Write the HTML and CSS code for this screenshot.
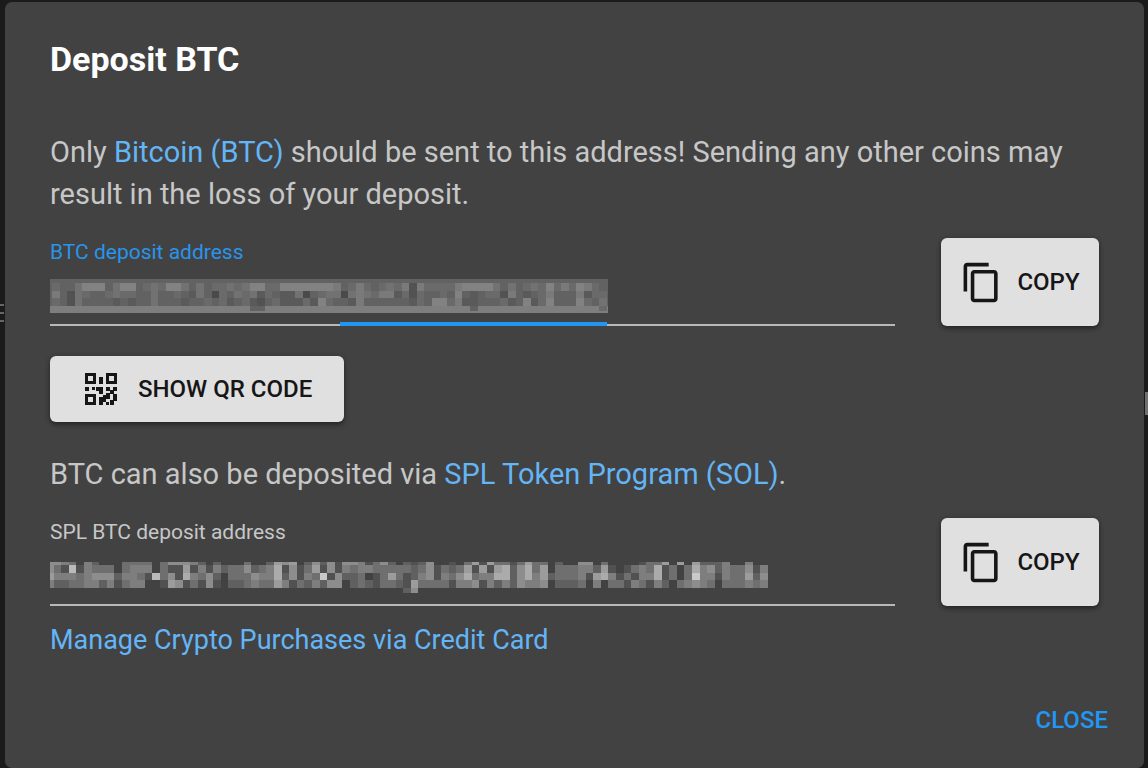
FILE: index.html
```html
<!DOCTYPE html>
<html lang="en">
<head>
<meta charset="utf-8">
<title>Deposit BTC</title>
<link rel="stylesheet" href="styles.css">
</head>
<body>
<svg width="0" height="0" class="sprite" aria-hidden="true">
  <symbol id="copy" viewBox="0 0 24 24"><path d="M16 1H4c-1.100 0-2 .9-2 2v14h2V3h12V1zm3 4H8c-1.100 0-2 .9-2 2v14c0 1.100.9 2 2 2h11c1.100 0 2-.9 2-2V7c0-1.100-.9-2-2-2zm0 16H8V7h11v14z"/></symbol>
</svg>
<div class="page">
  <div class="page-handle"></div>
  <div class="page-thumb"></div>
  <main class="dialog" role="dialog" aria-labelledby="title">
    <h1 class="title" id="title">Deposit BTC</h1>
    <div class="content">
      <p class="text">Only <a class="link" href="#btc">Bitcoin (BTC)</a> should be sent to this address! Sending any other coins may result in the loss of your deposit.</p>
      <div class="row">
        <div class="field focused">
          <label class="label" for="btc-address">BTC deposit address</label>
          <input class="input" id="btc-address" type="text" readonly>
          <svg class="mosaic" id="mosaic-btc" width="558" height="34" aria-hidden="true"></svg>
          <span class="accent"></span>
        </div>
        <button class="button copy" type="button"><svg class="copy-icon"><use href="#copy"/></svg>COPY</button>
      </div>
      <button class="button qr" type="button">
        <svg class="qr-icon" viewBox="0 0 34 34" aria-hidden="true">
          <path fill-rule="evenodd" d="M1 1h11v11H1zM4 4v5h5V4zM22 1h11v11H22zM25 4v5h5V4zM1 22h11v11H1zM4 25v5h5v-5z"/>
          <path d="M15 5h4v7h-4zM1 15h4v4H1zM8 15h3v3H8zM12 15h7v7h-4v-3h-3zM22 15h4v4h-4zM29 15h4v4h-4zM26 18h4v4h-4zM22 21h4v4h-4zM15 25h4v-2h7v4h-4v3h-3v3h-4zM29 22h4v7h-4zM26 28h4v5h-4zM22 30h3v3h-3z"/>
        </svg>SHOW QR CODE</button>
      <p class="text via">BTC can also be deposited via <a class="link" href="#spl">SPL Token Program (SOL)</a>.</p>
      <div class="row">
        <div class="field">
          <label class="label" for="spl-address">SPL BTC deposit address</label>
          <input class="input" id="spl-address" type="text" readonly>
          <svg class="mosaic" id="mosaic-spl" width="720" height="34" aria-hidden="true"></svg>
        </div>
        <button class="button copy" type="button"><svg class="copy-icon"><use href="#copy"/></svg>COPY</button>
      </div>
      <p class="text manage"><a class="link" href="#manage">Manage Crypto Purchases via Credit Card</a></p>
    </div>
    <div class="actions"><button class="close" type="button">CLOSE</button></div>
  </main>
</div>
<script src="mosaic.js"></script>
</body>
</html>
```
FILE: styles.css
```css
* { box-sizing: border-box; }
body { margin: 0; background: #1b1b1b; font-family: Roboto, "Liberation Sans", sans-serif; color: #c7c7c7; }
.sprite { position: absolute; }
.page { position: relative; min-height: 100vh; padding: 2px 4px 0 5px; display: flex; }
.page-handle { position: absolute; left: 0; top: 304px; width: 4px; height: 18px; background: repeating-linear-gradient(#666 0 2px, #1b1b1b 2px 8px); }
.page-thumb { position: absolute; right: 0; top: 392px; width: 3px; height: 23px; background: #707070; }
.dialog { flex: 1; min-width: 0; display: flex; flex-direction: column; background: #424242; border-radius: 7px; }
.title { margin: 0; padding: 33px 45px 0; font-size: 34px; line-height: 48px; font-weight: 700; color: #fff; }
.content { padding: 48px 45px 0; }
.text { margin: 0; font-size: 29px; line-height: 42px; }
.link { color: #64b5f6; text-decoration: none; }
.row { display: flex; align-items: stretch; gap: 46px; margin-top: 23px; }
.field { position: relative; flex: 1; min-width: 0; display: flex; flex-direction: column; border-bottom: 2px solid #b8b8b8; }
.label { font-size: 21px; line-height: 28px; }
.focused .label { color: #2994ea; }
.input { flex: 1; width: 100%; min-width: 0; padding: 0; border: 0; outline: 0; background: transparent; color: inherit; font: inherit; font-size: 29px; }
.mosaic { position: absolute; left: 0; bottom: 11px; }
.accent { position: absolute; left: 290px; bottom: -2px; width: 267px; height: 4px; background: #2196f3; }
.button { display: flex; align-items: center; justify-content: center; border: 0; border-radius: 6px; background: #e0e0e0; color: #161616; font-family: inherit; font-size: 24px; line-height: 42px; font-weight: 500; box-shadow: 0 3px 4px rgba(0,0,0,.3), 0 1px 6px rgba(0,0,0,.2); }
.copy { flex: none; width: 158px; height: 88px; gap: 14px; padding: 0; }
.copy-icon { width: 43px; height: 43px; fill: #161616; }
.qr { height: 66px; margin-top: 30px; padding: 0 32px 0 34px; gap: 20px; }
.qr-icon { width: 34px; height: 34px; fill: #161616; }
.via { margin-top: 31px; }
.manage { margin-top: 13px; font-size: 27px; }
.actions { display: flex; justify-content: flex-end; margin-top: auto; padding: 0 36px 27px; }
.close { border: 0; padding: 0; background: transparent; color: #2196f3; font-family: inherit; font-size: 24px; line-height: 42px; font-weight: 500; }
```
FILE: mosaic.js
```js
// Draws the censored addresses: every digit is the brightness of one cell.
function drawMosaic(id, options) {
  const svg = document.getElementById(id);
  const add = (x, y, w, h, grey) => {
    const rect = document.createElementNS("http://www.w3.org/2000/svg", "rect");
    rect.setAttribute("x", x);
    rect.setAttribute("y", y);
    rect.setAttribute("width", w);
    rect.setAttribute("height", h);
    rect.setAttribute("fill", `rgb(${grey},${grey},${grey})`);
    rect.setAttribute("shape-rendering", "crispEdges");
    svg.appendChild(rect);
  };
  if (options.selected) {
    add(0, 0, 558, 34, 98);
    add(0, 27, 558, 7, 126);
  }
  const cell = 7.6;
  options.rows.forEach((row, r) => {
    [...row].forEach((digit, c) => {
      if (digit === "-") return;
      const left = Math.max(0, options.start + c * cell);
      const right = options.start + (c + 1) * cell;
      const top = options.tops[r];
      add(left, top, right - left, options.tops[r + 1] - top, options.dark + digit * options.step);
    });
  });
}

drawMosaic("mosaic-btc", {
  selected: true, start: 2, dark: 74, step: 8, tops: [4, 12, 19, 27, 32],
  rows: [
    "43357773577345477535344545774477777776" + "34643454616444467777535345474647643",
    "63154334544335334325304354524322503455" + "05654662414334373234416323463336244",
    "43153333232335333233434234213422242743" + "32633333324377462233342372473337435",
    "--------------------------33----------" + "-----------------3----------------4"
  ]
});

drawMosaic("mosaic-spl", {
  start: -4, dark: 66, step: 15, tops: [3, 6, 14, 21, 29, 34],
  rows: [
    "55430420003333035554202000300265602525155413520212500103616331363302005503000013360606222400400",
    "53181433303444031161414233523471513615143443333323513236161672573603334426101343713037452433514",
    "64443455524431835174352033354472514391522301363124514357344772574623334167413144713039441433625",
    "42233442413440016513151022343364132425502321332163333144514242544502223040331431420345430333434",
    "-----------------------------------------------25"
  ]
});
```
